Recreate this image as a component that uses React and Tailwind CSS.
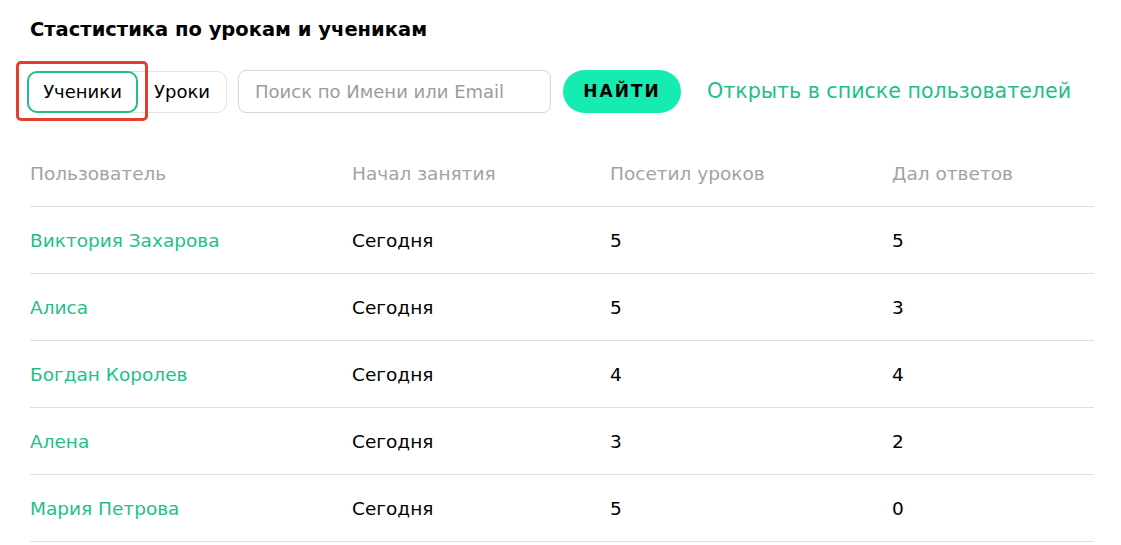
import React from "react";

const rows = [
  ["Виктория Захарова", "Сегодня", "5", "5"],
  ["Алиса", "Сегодня", "5", "3"],
  ["Богдан Королев", "Сегодня", "4", "4"],
  ["Алена", "Сегодня", "3", "2"],
  ["Мария Петрова", "Сегодня", "5", "0"],
];

const cols = "grid grid-cols-[322px_258px_282px_202px]";

export default function App() {
  return (
    <div
      className="relative w-[1121px] h-[545px] bg-white overflow-hidden px-[30px] pt-[16px] text-[#111]"
      style={{ fontFamily: "'DejaVu Sans', 'Noto Sans', sans-serif" }}
    >
      <h2 className="text-[19.5px] leading-[28px] font-bold text-black">
        Стастистика по урокам и ученикам
      </h2>

      <div className="mt-[26px] flex items-center h-[43px] -ml-[3px]">
        <div className="flex h-[42px] rounded-[10px] border border-[#e2e2e2]">
          <button className="-my-px -ml-px h-[42px] w-[111px] rounded-[10px] border-2 border-[#1fbf8a] text-[18px] text-black">
            Ученики
          </button>
          <button className="h-full w-[88px] text-[18px] text-black">Уроки</button>
        </div>
        <input
          className="ml-[11px] h-[43px] w-[313px] rounded-[8px] border border-[#d6d6d6] px-[16px] text-[18px] outline-none placeholder:text-[#9c9c9c]"
          placeholder="Поиск по Имени или Email"
        />
        <button className="ml-[12px] h-[43px] w-[118px] rounded-full bg-[#16ecb2] text-[17px] font-bold tracking-[2px] text-black">
          НАЙТИ
        </button>
        <a className="ml-[26px] text-[20.6px] text-[#1dbf8b]">Открыть в списке пользователей</a>
      </div>

      <div className="mt-[27px] w-[1064px] text-[18.5px]">
        <div className={`${cols} h-[67px] items-center border-b border-[#dedede] pt-[1px] text-[#a3a3a3]`}>
          <div>Пользователь</div>
          <div>Начал занятия</div>
          <div>Посетил уроков</div>
          <div>Дал ответов</div>
        </div>
        {rows.map((r) => (
          <div key={r[0]} className={`${cols} h-[67px] items-center border-b border-[#dedede] pt-[2px]`}>
            <div className="text-[#1dbf8b]">{r[0]}</div>
            <div className="text-black">{r[1]}</div>
            <div className="text-black">{r[2]}</div>
            <div className="text-black">{r[3]}</div>
          </div>
        ))}
      </div>

      <div className="pointer-events-none absolute left-[16px] top-[61px] h-[60px] w-[132px] rounded-[5px] border-[3px] border-[#e2402f]" />
    </div>
  );
}
